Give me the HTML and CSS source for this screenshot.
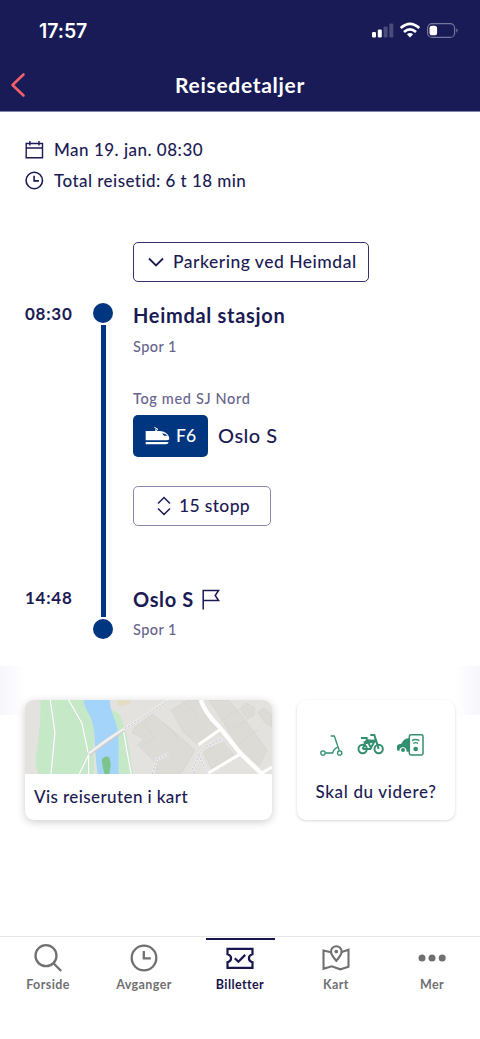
FILE: index.html
```html
<!DOCTYPE html>
<html lang="no">
<head>
<meta charset="utf-8">
<meta name="viewport" content="width=device-width, initial-scale=1">
<title>Reisedetaljer</title>
<link rel="stylesheet" href="styles.css">
</head>
<body>
<div class="app">
  <header class="header">
    <div class="status">
      <span class="clock">17:57</span>
      <svg class="status-icons" width="88" height="18" viewBox="0 0 88 18">
        <g fill="#fff">
          <rect x="1" y="10" width="4" height="5.500" rx="1.200"/>
          <rect x="6.800" y="7.500" width="4" height="8" rx="1.200"/>
          <rect x="12.600" y="4.500" width="4" height="11" rx="1.200" opacity=".22"/>
          <rect x="18.300" y="1.500" width="4" height="14" rx="1.200" opacity=".22"/>
        </g>
        <g fill="none" stroke="#fff" stroke-width="2.700">
          <path d="M29.700 6.100q9.300-8.400 18.600 0"/>
          <path d="M33 9.900q6-5.200 12 0"/>
        </g>
        <path d="M35.900 12.300q3.100-2.400 6.200 0l-3.100 3.200z" fill="#fff"/>
        <rect x="56.600" y="1.600" width="27" height="13.800" rx="4.500" fill="none" stroke="#747799" stroke-width="1.200"/>
        <rect x="58.500" y="3.700" width="7.600" height="9.600" rx="2.600" fill="#fff"/>
        <path d="M85.300 6.300q2.800 2.200 0 4.400z" fill="#747799"/>
      </svg>
    </div>
    <div class="titlebar">
      <svg class="back" width="16" height="26" viewBox="0 0 16 26"><path d="M13.500 2.500L2.500 13l11 10.500" fill="none" stroke="#f0606a" stroke-width="2.600" stroke-linecap="round" stroke-linejoin="round"/></svg>
      <h1 class="title">Reisedetaljer</h1>
    </div>
  </header>

  <section class="summary">
    <div class="fact">
      <svg width="20" height="20" viewBox="0 0 20 20" fill="none" stroke="#1b1b54" stroke-width="1.400"><path d="M1.200 3.500h16.300v14.300H1.200zM1.200 8h16.300M4.900 1v4.500M14 1v4.500"/></svg>
      <span class="fact-date">Man 19. jan. 08:30</span>
    </div>
    <div class="fact">
      <svg width="20" height="20" viewBox="0 0 20 20" fill="none" stroke="#1b1b54" stroke-width="1.600"><circle cx="9.300" cy="9.500" r="8.200"/><path d="M9.100 4.800v5.100h4.800"/></svg>
      <span class="fact-time">Total reisetid: 6 t 18 min</span>
    </div>
  </section>

  <main class="journey">
    <div class="times">
      <span>08:30</span>
      <span>14:48</span>
    </div>
    <div class="track">
      <span class="dot"></span>
      <span class="line"></span>
      <span class="dot"></span>
    </div>
    <div class="stops">
      <button class="outline parking">
        <svg width="18" height="12" viewBox="0 0 18 12" fill="none" stroke="#1b1b54" stroke-width="1.800"><path d="M2 2.500l7 7 7-7"/></svg>
        <span class="parking-text">Parkering ved Heimdal</span>
      </button>
      <h2 class="station from">Heimdal stasjon</h2>
      <p class="muted platform">Spor 1</p>
      <p class="muted operator">Tog med SJ Nord</p>
      <div class="leg">
        <span class="badge">
          <svg width="25" height="20" viewBox="0 0 75 60" fill="#fff"><path d="M2 15h42q22 2 28 17l1 8q-2 3-8 3H2zM51 22l6 7 11 0q-6-6-17-7z" fill-rule="evenodd"/><path d="M36 15l-5-5M28 4l11 6-10 6" fill="none" stroke="#fff" stroke-width="3"/><path d="M2 48h69q-2 7-8 7H2z"/></svg>
          <span class="badge-text">F6</span>
        </span>
        <span class="direction">Oslo S</span>
      </div>
      <button class="outline calls">
        <svg width="14" height="20" viewBox="0 0 14 20" fill="none" stroke="#1b1b54" stroke-width="1.500"><path d="M1 7.500l6-6 6 6M1 12.500l6 6 6-6"/></svg>
        <span class="calls-text">15 stopp</span>
      </button>
      <div class="arrival">
        <h2 class="station to">Oslo S</h2>
        <svg width="18" height="21" viewBox="0 0 18 21" fill="none" stroke="#1b1b54" stroke-width="1.500"><path d="M1.200 20.500V1.500h15.400l-3.400 5 3.400 5.100H1.200"/></svg>
      </div>
      <p class="muted platform-end">Spor 1</p>
    </div>
  </main>

  <section class="cards">
    <div class="card map-card">
      <svg class="map" viewBox="45 30 742 222" preserveAspectRatio="none">
        <rect x="45" y="30" width="742" height="222" fill="#e3e2de"/>
        <path d="M92 30h160v222H85q-10-25-6-60 12-60 13-162zM300 62q22-4 34 20l18 60 18 110h-45l-12-120z" fill="#c5e9c6"/>
        <path d="M222 30h77q2 28 12 50 14 30 15 70v102h-63q-8-60-10-122-4-40-19-63-12-18-12-37z" fill="#a5d4fa"/>
        <path d="M276 210q8-16 22-8l5 22-5 28h-14q-7-20-8-42z" fill="#7bc58a"/>
        <path d="M323 30h40l-4 12-28 8-10-8z" fill="#e4dcc4"/>
        <g fill="#dddbd6" stroke="#d3d1cc" stroke-width="1.500">
          <path d="M374 112l54-40 57 46 70 63-42 71h-75l4-28-58-60 18-18-34-17z"/>
          <path d="M485 60l46-28h34l62 86-64 45-42-36z"/>
          <path d="M598 30h58l36 40 80 110-24 47-60-55z"/>
          <path d="M692 58l16-20 28 17-5 23-20 7zM745 68l16-14 26 20v38l-22-15z"/>
          <path d="M578 183l64-25 30 36-66 42z"/>
          <path d="M400 98l34 45-35 25M515 30l50 46M456 92l50 55M640 90l50-35M665 120l53-35M690 158l56-39" fill="none"/>
        </g>
        <g fill="none" stroke="#d0dcd2" stroke-width="6">
          <path d="M121 30l14 98-12 124M176 30l40 70 20 95v57M236 195l-28 57M341 122l10 60 13 70"/>
        </g>
        <g fill="none" stroke="#fff" stroke-width="3.500">
          <path d="M121 30l14 98-12 124M176 30l40 70 20 95v57M236 195l-28 57M341 122l10 60 13 70"/>
        </g>
        <path d="M236 193l58-43 47-31" fill="none" stroke="#cccdd1" stroke-width="13"/>
        <path d="M236 191l58-43 47-31" fill="none" stroke="#f0f0f1" stroke-width="8"/>
        <g fill="none" stroke="#ececec" stroke-width="8"><path d="M339 119l60-38 76-51M565 195l22-24 50-25M553 250l-5-12 20-41 18 38 15 15M428 252l12-42 36-20"/></g>
        <g fill="none" stroke="#bdbccf" stroke-width="2.500" stroke-dasharray="7 4"><path d="M345 116l60-38 70-46M565 195l22-24 50-25M553 250l-5-12 20-41 18 38 15 15M428 252l12-42 36-20"/></g>
        <g fill="none" stroke="#fff"><path d="M573 30q12 38 55 80l66 82 68 65" stroke-width="13"/><path d="M632 118l-66 46M692 192l-96 57M752 252l35-21" stroke-width="9"/></g>
      </svg>
      <div class="map-label">Vis reiseruten i kart</div>
    </div>
    <div class="card onward-card">
      <svg class="modes" width="106" height="26" viewBox="118 126 318 78">
        <g fill="none" stroke="#328f70" stroke-width="4">
          <circle cx="130" cy="189" r="6.500"/><circle cx="180" cy="189" r="6.500"/>
          <path d="M137 189h22q3-13 14-17M153 138h11l15 44"/>
        </g>
        <g fill="none" stroke="#328f70" stroke-width="6">
          <circle cx="249" cy="177" r="12.500"/><circle cx="297" cy="177" r="12.500"/>
          <path d="M249 177l12-27 24 3-13 24h-23M261 148l14 28M272 135h12l13 42M244 144h20"/>
          <path d="M252 159l35-7" stroke-width="9"/>
        </g>
        <path d="M352 180v-12q2-6 13-7 8-16 23-16v40h-7q-1-14-12-13-10 1-10 12z" fill="#328f70"/>
        <circle cx="370" cy="180" r="6" fill="#328f70"/>
        <rect x="389" y="134" width="41" height="61" rx="5" fill="#fff" stroke="#328f70" stroke-width="4.500"/>
        <g fill="none" stroke="#328f70" stroke-width="4"><path d="M397 152q11-7 22 0M401 160q7-4 14 0"/></g>
        <circle cx="408" cy="177" r="7" fill="#328f70"/>
      </svg>
      <div class="onward-label">Skal du videre?</div>
    </div>
  </section>

  <nav class="tabs">
    <div class="tab">
      <svg width="30" height="30" viewBox="0 0 30 30" fill="none" stroke="#707072" stroke-width="2.300"><circle cx="13" cy="12.700" r="10.500"/><path d="M20.200 20l8 8"/></svg>
      <span>Forside</span>
    </div>
    <div class="tab">
      <svg width="30" height="30" viewBox="0 0 30 30" fill="none" stroke="#707072" stroke-width="2.300"><circle cx="15" cy="15" r="12.300"/><path d="M14.800 8v7.400h7"/></svg>
      <span>Avganger</span>
    </div>
    <div class="tab active">
      <svg width="30" height="30" viewBox="0 0 30 30" fill="none" stroke="#18164f" stroke-width="2.200"><path d="M2.500 5.800h25v5.400q-3.600 1-3.600 4t3.600 4v5.600h-25v-5.600q3.600-1 3.600-4t-3.600-4z"/><path d="M9.800 15.200l3.600 3.500 6.800-6.800"/></svg>
      <span>Billetter</span>
    </div>
    <div class="tab">
      <svg width="30" height="30" viewBox="0 0 30 30" fill="none" stroke="#707072" stroke-width="2.100"><path d="M10 9.200l-7.500-1.700v18.300l8.200-2.500 8.600 3 8.200-2.500V6.700L20 9.200"/><path d="M15.300 17.800Q10 12 10 8.600a5.300 5.300 0 0110.600 0Q20.600 12 15.300 17.800z"/><circle cx="15.300" cy="8.500" r="1.200" fill="#707072" stroke-width="1.300"/></svg>
      <span>Kart</span>
    </div>
    <div class="tab">
      <svg width="30" height="30" viewBox="0 0 30 30" fill="#707072"><circle cx="5" cy="15" r="3.500"/><circle cx="15" cy="15" r="3.500"/><circle cx="25.200" cy="15" r="3.500"/></svg>
      <span>Mer</span>
    </div>
  </nav>
</div>
</body>
</html>
```

FILE: styles.css
```css
* { box-sizing: border-box; }
body, h1, h2, p { margin: 0; }
body { background: #fff; }
.app {
  width: 480px;
  height: 1039px;
  overflow: hidden;
  display: flex;
  flex-direction: column;
  font-family: Lato, "Noto Sans", sans-serif;
  font-weight: 500;
  font-size: 17px;
  color: #1b1b54;
  white-space: nowrap;
}
.header { height: 112px; background: #181b56; border-bottom: 1px solid #8285a8; color: #fff; }
.status { height: 60px; padding: 1px 21px 0 39px; display: flex; align-items: center; justify-content: space-between; }
.clock { font-family: Inter, sans-serif; font-weight: 600; font-size: 19.500px; letter-spacing: -.05px; }
.titlebar { height: 50px; padding-left: 10px; display: grid; grid-template-columns: 16px 1fr 26px; align-items: center; }
.title { text-align: center; font-size: 21px; line-height: 26px; font-weight: 700; letter-spacing: .7px; }

.summary { height: 130px; padding: 22px 25px 0; }
.fact { height: 31px; display: flex; align-items: center; gap: 9px; }
.fact-date { letter-spacing: .5px; }
.fact-time { letter-spacing: .45px; }

.journey { height: 424px; padding: 0 25px; display: grid; grid-template-columns: 68px 20px 1fr; }
.times { height: 367px; padding-top: 61px; display: flex; flex-direction: column; justify-content: space-between; font-weight: 700; line-height: 22px; letter-spacing: .75px; }
.track { height: 397px; padding-top: 61px; display: flex; flex-direction: column; align-items: center; gap: 2px; }
.dot { width: 20px; height: 20px; border-radius: 50%; background: #00357f; }
.line { width: 5px; flex: 1; background: #00357f; }
.stops { padding-left: 20px; }
.outline {
  display: flex;
  align-items: center;
  height: 40px;
  padding: 0 0 1px;
  background: #fff;
  border: 1.400px solid #34316b;
  border-radius: 5px;
  color: inherit;
  font: inherit;
}
.parking { width: 236px; padding-left: 13px; gap: 8px; }
.parking-text { letter-spacing: .5px; font-size: 17.500px; }
.station { font-size: 20px; line-height: 26px; font-weight: 700; }
.from { margin-top: 20px; letter-spacing: .7px; }
.muted { font-size: 14.500px; line-height: 20px; color: #66648c; }
.platform { margin-top: 9px; letter-spacing: .45px; }
.operator { margin-top: 32px; letter-spacing: .65px; }
.leg { display: flex; align-items: center; gap: 10px; margin-top: 6px; }
.badge { width: 75px; height: 42px; border-radius: 5px; background: #00357f; color: #fff; display: flex; align-items: center; padding-left: 12px; gap: 6px; }
.badge-text { font-size: 17.500px; letter-spacing: .2px; padding-bottom: 1px; }
.direction { font-size: 20px; letter-spacing: .5px; padding-bottom: 2px; }
.calls { width: 138px; margin-top: 29px; padding-left: 23px; gap: 8px; border-color: #8a87ad; }
.calls-text { font-size: 17.500px; letter-spacing: .35px; }
.arrival { margin-top: 60px; display: flex; align-items: center; gap: 8px; }
.to { letter-spacing: .65px; }
.platform-end { margin-top: 8px; letter-spacing: .45px; }

.cards {
  height: 270px;
  padding: 34px 25px 0 25px;
  display: flex;
  justify-content: space-between;
  align-items: flex-start;
  background: linear-gradient(90deg, #f6f5fb 0, #fff 25px, #fff 455px, #f6f5fb 480px) 0 0 / 100% 49px no-repeat;
}
.card { height: 120px; border-radius: 9px; background: #fff; overflow: hidden; }
.map-card { width: 247px; box-shadow: 0 2px 8px rgba(0, 0, 0, .2); }
.map { display: block; width: 247px; height: 74px; }
.map-label { padding-left: 9px; line-height: 45px; letter-spacing: .4px; }
.onward-card { width: 158px; box-shadow: 0 1px 3px rgba(0, 0, 0, .16); display: flex; flex-direction: column; align-items: center; padding-top: 32px; }
.modes { display: block; margin-right: 8px; }
.onward-label { margin-top: 22px; line-height: 24px; letter-spacing: .65px; }

.tabs { height: 103px; border-top: 1px solid #e6e6e8; display: grid; grid-template-columns: repeat(5, 1fr); justify-items: center; }
.tab { width: 69px; height: 70px; margin-top: 1px; border-top: 2px solid transparent; padding-top: 3px; display: flex; flex-direction: column; align-items: center; font-size: 12.500px; line-height: 16px; font-weight: 700; color: #707072; gap: 4px; }
.tab svg { flex: none; }
.tab.active { border-color: #18164f; color: #18164f; }
.tab span { letter-spacing: .4px; }
```
